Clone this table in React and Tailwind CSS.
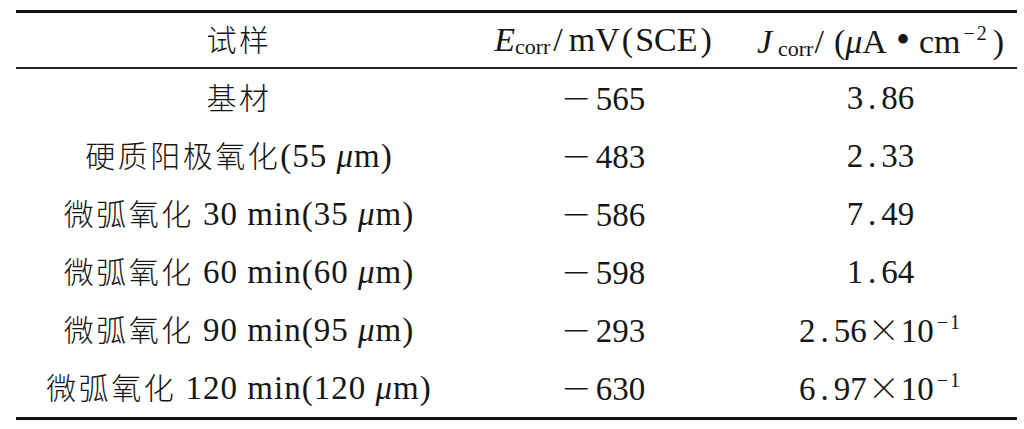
import React from "react";

const F = "font-['Liberation_Serif','Noto_Sans_CJK_SC',serif]";
const CJK = "font-['Noto_Sans_CJK_SC',sans-serif]";

function Mu() {
  return <i className="font-['Liberation_Serif',serif]">μ</i>;
}

function Minus() {
  return <span className={`${CJK} font-light text-[31px] mr-[4px]`}>－</span>;
}

function Sup({ children }) {
  return <span className="text-[20px] align-[13px] ml-[3px] tracking-[2px]">{children}</span>;
}

function Cn({ children }) {
  return <span className={`${CJK} font-light text-[30px] tracking-[2.5px]`}>{children}</span>;
}

function Num({ v }) {
  const [a, b] = v.split(".");
  return (
    <>
      {a}
      <span className="inline-block w-[0.55em] text-center">.</span>
      {b}
    </>
  );
}

function Times() {
  return <span className={`${CJK} font-light text-[32px] mx-[1px]`}>×</span>;
}

const rows = [
  { label: <Cn>基材</Cn>, e: "565", j: <Num v="3.86" /> },
  {
    label: (
      <>
        <Cn>硬质阳极氧化</Cn>
        <span>(55 <Mu />m)</span>
      </>
    ),
    e: "483",
    j: <Num v="2.33" />,
  },
  {
    label: (
      <>
        <Cn>微弧氧化</Cn>
        <span> 30 min(35 <Mu />m)</span>
      </>
    ),
    e: "586",
    j: <Num v="7.49" />,
  },
  {
    label: (
      <>
        <Cn>微弧氧化</Cn>
        <span> 60 min(60 <Mu />m)</span>
      </>
    ),
    e: "598",
    j: <Num v="1.64" />,
  },
  {
    label: (
      <>
        <Cn>微弧氧化</Cn>
        <span> 90 min(95 <Mu />m)</span>
      </>
    ),
    e: "293",
    j: (
      <>
        <Num v="2.56" />
        <Times />
        10<Sup>−1</Sup>
      </>
    ),
  },
  {
    label: (
      <>
        <Cn>微弧氧化</Cn>
        <span> 120 min(120 <Mu />m)</span>
      </>
    ),
    e: "630",
    j: (
      <>
        <Num v="6.97" />
        <Times />
        10<Sup>−1</Sup>
      </>
    ),
  },
];

export default function App() {
  return (
    <div className={`w-[1024px] h-[429px] bg-white text-[#161616] ${F} text-[33px] leading-none pt-[10px] pl-[16px]`}>
      <div className="w-[1001px] border-t-[3px] border-b-[3px] border-[#111]">
        <div className="grid grid-cols-[446px_282px_273px] h-[56px] items-center border-b-2 border-[#222]">
          <div className="text-center">
            <Cn>试样</Cn>
          </div>
          <div className="text-center whitespace-nowrap text-[34px]">
            <i>E</i>
            <span className="text-[22px] align-[-3px]">corr</span>
            <span className="ml-[3px]">/</span>
            <span className="ml-[6px]">mV</span>
            <span className="ml-[2px]">(</span>
            <span className="ml-[2px]">SCE</span>
            <span className="ml-[3px]">)</span>
          </div>
          <div className="text-center whitespace-nowrap text-[34px]">
            <i>J</i>
            <span className="text-[22px] align-[-3px] ml-[6px]">corr</span>
            <span className="ml-[1px]">/</span>
            <span className="ml-[10px]">(</span>
            <Mu />
            <span>A</span>
            <span className="text-[40px] mx-[9px]">•</span>
            <span>cm</span>
            <Sup>−2</Sup>
            <span className="ml-[4px]">)</span>
          </div>
        </div>
        {rows.map((r, i) => (
          <div key={i} className="grid grid-cols-[446px_282px_273px] h-[58px] items-center">
            <div className="text-center whitespace-nowrap tracking-[1px]">{r.label}</div>
            <div className="text-center whitespace-nowrap">
              <Minus />
              {r.e}
            </div>
            <div className="text-center whitespace-nowrap">{r.j}</div>
          </div>
        ))}
      </div>
    </div>
  );
}
